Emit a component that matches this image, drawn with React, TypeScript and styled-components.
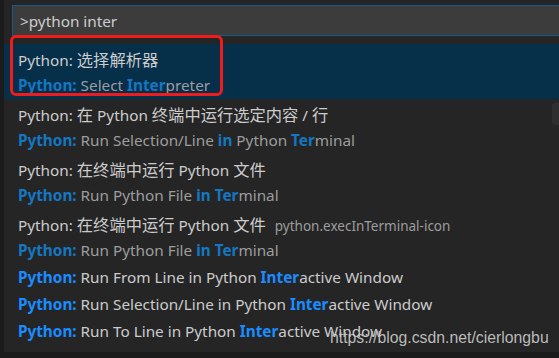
import React from "react";
import styled, { createGlobalStyle } from "styled-components";

const Global = createGlobalStyle`
  html, body { margin: 0; padding: 0; background: #141414; overflow: hidden; }
  * { box-sizing: border-box; }
`;

const Frame = styled.div`
  position: relative;
  width: 559px;
  height: 358px;
  background: #1b1b1b;
  font-family: "Noto Sans", "Noto Sans CJK SC", sans-serif;
  font-size: 15.3px;
  color: #cccccc;
  overflow: hidden;
`;

const Panel = styled.div`
  position: relative;
  margin-left: 4px;
  height: 352px;
  background: #252526;
  display: flex;
  flex-direction: column;
  padding-top: 5px;
`;

const InputBox = styled.div`
  margin-left: 8px;
  height: 31px;
  background: #3c3c3c;
  border: 1px solid #175a87;
  border-right: none;
  display: flex;
  align-items: center;
  padding-left: 7px;
  color: #cccccc;
  font-size: 15.3px;
`;

const List = styled.div`
  margin-top: 8px;
  display: flex;
  flex-direction: column;
`;

const Item = styled.div<{ $selected?: boolean }>`
  height: 55px;
  padding: 2px 0 1px 14px;
  display: flex;
  flex-direction: column;
  background: ${(p) => (p.$selected ? "#062f4a" : "transparent")};
`;

const Line = styled.div`
  height: 26px;
  line-height: 26px;
  white-space: nowrap;
`;

const Detail = styled(Line)`
  color: #9d9d9d;
`;

const Cjk = styled.span`
  font-family: "Noto Sans CJK SC", sans-serif;
  font-size: 16.3px;
`;

const SingleRow = styled.div`
  height: 27px;
  line-height: 27px;
  padding-left: 14px;
  white-space: nowrap;
`;

const Hl = styled.span<{ $dim?: boolean }>`
  color: ${(p) => (p.$dim ? "#1577c1" : "#1a8cff")};
  font-weight: 700;
`;

const Desc = styled.span`
  margin-left: 9px;
  font-size: 13.5px;
  color: #9d9d9d;
`;

const Scroll = styled.div`
  position: absolute;
  right: 0;
  top: 103px;
  width: 7px;
  height: 22px;
  border-radius: 3px 0 0 3px;
  background: #2f2f30;
`;

const Annot = styled.div`
  position: absolute;
  left: 10px;
  top: 35px;
  width: 213px;
  height: 61px;
  border: 3px solid #f01b1b;
  border-radius: 6px;
  pointer-events: none;
`;

const Watermark = styled.div`
  position: absolute;
  left: 330px;
  top: 329px;
  font-family: "Liberation Sans", Arial, sans-serif;
  font-size: 15.8px;
  color: rgba(235, 235, 235, 0.78);
  text-shadow: 0 0 1px rgba(0, 0, 0, 0.4);
  white-space: nowrap;
`;

export default function App() {
  return (
    <>
      <Global />
      <Frame>
        <Panel>
          <InputBox>&gt;python inter</InputBox>
          <List>
            <Item $selected>
              <Line>
                Python: <Cjk>选择解析器</Cjk>
              </Line>
              <Detail>
                <Hl $dim>Python:</Hl> Select <Hl $dim>Inter</Hl>preter
              </Detail>
            </Item>
            <Item>
              <Line>
                Python: <Cjk>在</Cjk> Python <Cjk>终端中运行选定内容</Cjk> / <Cjk>行</Cjk>
              </Line>
              <Detail>
                <Hl $dim>Python:</Hl> Run Selection/Line <Hl $dim>in</Hl> Python <Hl $dim>Ter</Hl>minal
              </Detail>
            </Item>
            <Item>
              <Line>
                Python: <Cjk>在终端中运行</Cjk> Python <Cjk>文件</Cjk>
              </Line>
              <Detail>
                <Hl $dim>Python:</Hl> Run Python File <Hl $dim>in Ter</Hl>minal
              </Detail>
            </Item>
            <Item>
              <Line>
                Python: <Cjk>在终端中运行</Cjk> Python <Cjk>文件</Cjk>
                <Desc>python.execInTerminal-icon</Desc>
              </Line>
              <Detail>
                <Hl $dim>Python:</Hl> Run Python File <Hl $dim>in Ter</Hl>minal
              </Detail>
            </Item>
            <SingleRow>
              <Hl>Python:</Hl> Run From Line in Python <Hl>Inter</Hl>active Window
            </SingleRow>
            <SingleRow>
              <Hl>Python:</Hl> Run Selection/Line in Python <Hl>Inter</Hl>active Window
            </SingleRow>
            <SingleRow>
              <Hl>Python:</Hl> Run To Line in Python <Hl>Inter</Hl>active Window
            </SingleRow>
          </List>
          <Scroll />
        </Panel>
        <Annot />
        <Watermark>https://blog.csdn.net/cierlongbu</Watermark>
      </Frame>
    </>
  );
}
